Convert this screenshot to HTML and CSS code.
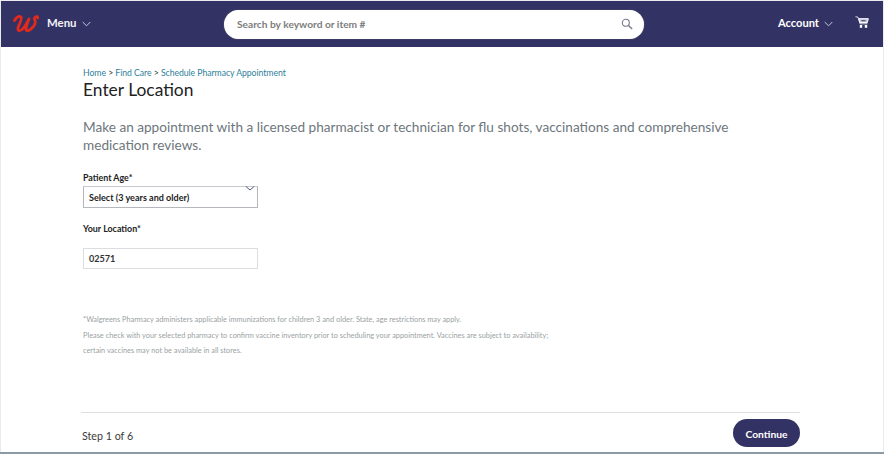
FILE: index.html
```html
<!DOCTYPE html>
<html lang="en">
<head>
<meta charset="utf-8">
<title>Enter Location</title>
<link rel="stylesheet" href="styles.css">
</head>
<body>
<div class="window">
  <header class="topbar">
    <div class="brand">
      <svg class="logo" width="26" height="20" viewBox="0 0 26 20"><path d="M1.500 6.500C3 3.500 6 1.500 8 3 9.500 4.500 6.500 9.500 5.300 12.800 4 16.500 6 17.800 9 15.500 12 13 14 9 16 5 14 10 12.600 14 13.200 16 14 18 17 16.500 20 13 23 9.500 23 7 21.200 4.800 22 2.800 25 1.500 24.800 3.800" fill="none" stroke="#e1291c" stroke-width="2.800" stroke-linecap="round" stroke-linejoin="round"/></svg>
      <span class="menu">Menu</span>
      <svg class="chev" width="9" height="6" viewBox="0 0 9 6"><path d="M.7 1l3.800 3.800L8.300 1" fill="none" stroke="#c9c9dc" stroke-width="1"/></svg>
    </div>
    <div class="search">
      <span class="search-text">Search by keyword or item #</span>
      <svg width="12" height="12" viewBox="0 0 12 12"><circle cx="4.800" cy="4.800" r="3.500" fill="none" stroke="#77778f" stroke-width="1.100"/><path d="M7.500 7.500l3.600 3.600" stroke="#77778f" stroke-width="1.400"/></svg>
    </div>
    <div class="account">
      <span class="account-text">Account</span>
      <svg class="chev" width="9" height="6" viewBox="0 0 9 6"><path d="M.7 1l3.800 3.800L8.300 1" fill="none" stroke="#c9c9dc" stroke-width="1"/></svg>
      <svg class="cart" width="14" height="12" viewBox="0 0 14 12"><path d="M.5.700L3 1.200 5 7.800H12.500" fill="none" stroke="#dfdfec" stroke-width="1"/><path d="M3.800 2.700H13.300L12.300 6.500H4.900Z" fill="#c4c4d8" stroke="#fff" stroke-width="1"/><rect x="6.500" y="4" width="4" height="1.300" fill="#56567e"/><rect x="4.800" y="9" width="2.400" height="2.800" fill="#fff"/><rect x="9.800" y="9" width="2.400" height="2.800" fill="#fff"/></svg>
    </div>
  </header>
  <main class="content">
    <nav class="crumbs"><a>Home</a> <span>&gt;</span> <a>Find Care</a> <span>&gt;</span> <a>Schedule Pharmacy Appointment</a></nav>
    <h1 class="title">Enter Location</h1>
    <p class="lead">Make an appointment with a licensed pharmacist or technician for flu shots, vaccinations and comprehensive medication reviews.</p>
    <label class="label">Patient Age*</label>
    <div class="select">
      <span>Select (3 years and older)</span>
      <svg class="select-chev" width="10" height="5" viewBox="0 0 10 5"><path d="M.7.300L5 4 9.300.300" fill="none" stroke="#56567e" stroke-width="1"/></svg>
    </div>
    <label class="label label-loc">Your Location*</label>
    <div class="input">02571</div>
    <div class="notes">
      <p>*Walgreens Pharmacy administers applicable immunizations for children 3 and older. State, age restrictions may apply.</p>
      <p>Please check with your selected pharmacy to confirm vaccine inventory prior to scheduling your appointment. Vaccines are subject to availability;</p>
      <p>certain vaccines may not be available in all stores.</p>
    </div>
  </main>
  <footer class="footer">
    <span class="step">Step 1 of 6</span>
    <button class="continue" type="button">Continue</button>
  </footer>
</div>
</body>
</html>
```
FILE: styles.css
```css
* { box-sizing: border-box; }
html, body { margin: 0; height: 100%; }
body {
  width: 884px;
  height: 454px;
  overflow: hidden;
  background: #fff;
  font-family: Lato, "Noto Sans", sans-serif;
}
.window {
  width: 884px;
  height: 454px;
  padding: 1px 1px 0 1px;
  background: #e9e9ee;
  border-bottom: 2px solid #8b9aa5;
  display: flex;
  flex-direction: column;
}
.topbar {
  height: 46px;
  flex: none;
  background: #333264;
  display: flex;
  align-items: center;
  padding: 0 14px 0 12px;
  position: relative;
}
.brand { display: flex; align-items: center; width: 211px; }
.logo { margin-right: 8px; }
.menu { color: #f2f2f7; font-size: 11.400px; font-weight: 700; margin: -3px 5px 0 0; }
.chev { display: block; }
.search {
  width: 420px;
  height: 29px;
  background: #fff;
  border-radius: 15px;
  display: flex;
  align-items: center;
  justify-content: space-between;
  padding: 0 11px 0 13px;
  box-shadow: 0 0 1px #999;
}
.search-text { font-size: 10.200px; font-weight: 700; color: #7d7d7d; margin-top: -1px; }
.account { margin-left: auto; display: flex; align-items: center; }
.account-text { color: #fff; font-size: 11.100px; font-weight: 700; margin: -3px 5px 0 0; }
.cart { margin-left: 22px; margin-top: -4px; }
.content { flex: 1; background: #fff; padding: 20px 0 0 82px; min-height: 0; }
.crumbs { font-size: 8.700px; line-height: 12px; color: #333; letter-spacing: -.05px; }
.crumbs a { color: #2f7f9b; }
.title { margin: 0; font-size: 17.400px; line-height: 22px; font-weight: 400; color: #222; }
.lead { margin: 17px 0 0; width: 660px; font-size: 13.620px; line-height: 18px; color: #6d767c; }
.label { display: block; font-size: 8.900px; font-weight: 700; color: #222; line-height: 12px; }
.lead + .label { margin-top: 18px; }
.select {
  position: relative;
  width: 175px;
  height: 22px;
  margin-top: 2px;
  border: 1px solid #b4b8bd;
  border-top-color: #c6c9cd;
  padding-left: 5px;
  display: flex;
  align-items: center;
  font-size: 9.050px;
  font-weight: 700;
  color: #222;
}
.select-chev { position: absolute; right: 2px; top: -1px; }
.label-loc { margin-top: 15px; }
.input {
  width: 175px;
  height: 21px;
  margin-top: 13px;
  border: 1px solid #dcdde0;
  padding-left: 5px;
  display: flex;
  align-items: center;
  font-size: 9.100px;
  font-weight: 700;
  color: #333;
}
.notes { margin-top: 43px; font-size: 7.370px; line-height: 15.500px; color: #9a9fa3; }
.notes p { margin: 0; }
.footer {
  height: 40px;
  flex: none;
  margin: 0 83px 0 80px;
  background: #fff;
  border-top: 1px solid #dedfe2;
  display: flex;
  justify-content: space-between;
  align-items: flex-start;
  box-shadow: -80px 0 0 #fff, 83px 0 0 #fff;
}
.step { margin: 15px 0 0 1px; font-size: 10.700px; line-height: 16px; color: #3a3a3a; }
.continue {
  margin-top: 6px;
  width: 67px;
  height: 28px;
  border: 0;
  border-radius: 15px;
  background: #333264;
  color: #fff;
  font-family: inherit;
  font-size: 10.300px;
  font-weight: 700;
  padding: 1px 0 0;
}
```
